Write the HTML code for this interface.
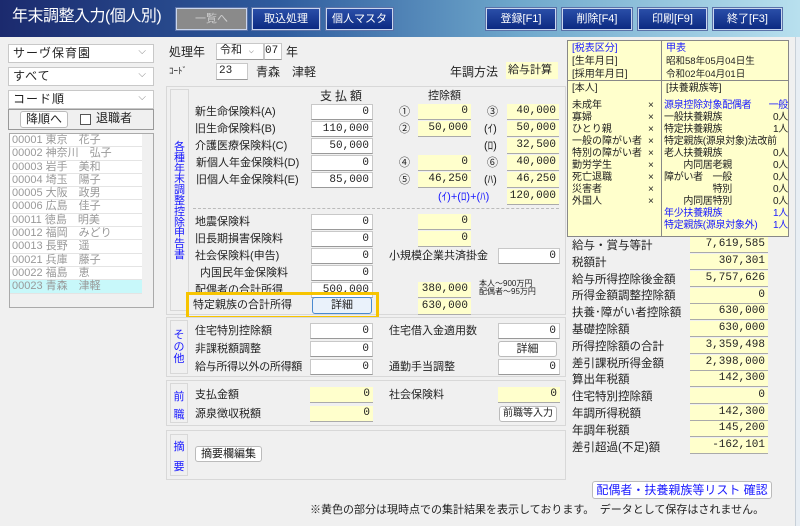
<!DOCTYPE html>
<html><head><meta charset="utf-8"><style>
*{margin:0;padding:0;box-sizing:border-box}
body{width:800px;height:526px;background:#f0f0f0;position:relative;overflow:hidden;font-family:"Liberation Sans","Noto Sans CJK JP",sans-serif;font-size:11px;line-height:1.2;color:#222}
.a{position:absolute;white-space:nowrap}
.tb{position:absolute;left:0;top:0;width:800px;height:37px;background:linear-gradient(90deg,#1b2a6e 0%,#2f5c9e 35%,#6fa8cc 65%,#b8e0ee 100%)}
.title{left:12px;top:7px;color:#fff;font-size:16px;letter-spacing:-0.5px}
.btn{position:absolute;height:22px;top:8px;background:linear-gradient(#2a4ea8,#0c2a82);border:1px solid #c9d6ee;outline:1px solid #5a72a8;color:#fff;font-size:11px;text-align:center;line-height:20px}
.btn.g{background:#8a8a8a;color:#ccc}
.sel{position:absolute;left:8px;width:146px;height:19px;background:#fff;border:1px solid #c8c8c8;font-size:12px;line-height:17px;padding-left:4px;letter-spacing:1px}
.sel:after{content:"⌵";position:absolute;right:6px;top:-2px;color:#888;font-size:10px}
.in{position:absolute;height:16px;background:#fff;border:1px solid #c8c8c8;border-bottom:1px solid #999;text-align:right;padding-right:3px;font-size:11px;line-height:15px;font-family:"Liberation Mono","Noto Sans CJK JP",monospace;overflow:hidden;white-space:nowrap}
.y{background:#ffffcc;border:none;border-bottom:1px solid #aaa}
.pb{position:absolute;border:1px solid #d8d8d8;background:#f0f0f0}
.lb{position:absolute;border:1px solid #d8d8d8;color:#1a1aff;font-size:11px;text-align:center;line-height:12px}
.bt{position:absolute;background:#fff;border:1px solid #bbb;border-radius:3px;text-align:center;font-size:11px;line-height:14px;white-space:nowrap}
.list div{height:13.3px;line-height:13px;font-size:11px;color:#999;padding-left:2px;border-bottom:1px solid #e4e4e4;background:#fff;white-space:nowrap}
.blue{color:#1a1aff}
.info{position:absolute;left:567px;top:40px;width:222px;height:197px;background:#ffffcc;border:1px solid #888}
.info .a{font-size:10px}
</style></head><body>
<div class="tb"></div>
<div class="a title">年末調整入力(個人別)</div>
<div class="btn g" style="left:176px;width:71px">一覧へ</div>
<div class="btn" style="left:252px;width:68px">取込処理</div>
<div class="btn" style="left:326px;width:67px">個人マスタ</div>
<div class="btn" style="left:486px;width:70px">登録[F1]</div>
<div class="btn" style="left:562px;width:70px">削除[F4]</div>
<div class="btn" style="left:638px;width:69px">印刷[F9]</div>
<div class="btn" style="left:713px;width:69px">終了[F3]</div>
<div class="a" style="left:795px;top:37px;width:5px;height:489px;background:#e8eef4;border-left:1px solid #c8d0d8"></div>

<div class="sel" style="top:44px">サーヴ保育園</div>
<div class="sel" style="top:67px">すべて</div>
<div class="sel" style="top:90px">コード順</div>
<div class="a" style="left:8px;top:109px;width:146px;height:21px;border:1px solid #999;background:#f0f0f0"></div>
<div class="bt" style="left:20px;top:111px;width:48px;height:17px;font-size:12px">降順へ</div>
<div class="a" style="left:80px;top:114px;width:11px;height:11px;border:1px solid #555;background:#fff"></div>
<div class="a" style="left:96px;top:111px;font-size:12px">退職者</div>
<div class="a list" style="left:9px;top:133px;width:145px;height:175px;border:1px solid #aaa;background:#f0f0f0;overflow:hidden">
<div style="width:132px">00001 東京　花子</div><div style="width:132px">00002 神奈川　弘子</div><div style="width:132px">00003 岩手　美和</div><div style="width:132px">00004 埼玉　陽子</div><div style="width:132px">00005 大阪　政男</div><div style="width:132px">00006 広島　佳子</div><div style="width:132px">00011 徳島　明美</div><div style="width:132px">00012 福岡　みどり</div><div style="width:132px">00013 長野　遥</div><div style="width:132px">00021 兵庫　藤子</div><div style="width:132px">00022 福島　恵</div><div style="width:132px;background:#c8f8fa">00023 青森　津軽</div></div>

<div class="a" style="left:169px;top:45px;font-size:12px">処理年</div>
<div class="in" style="left:216px;top:43px;width:48px;height:17px;text-align:left;padding-left:3px;font-size:11px;line-height:15px">令和 <span style="color:#999;font-size:9px">⌵</span></div>
<div class="in" style="left:264px;top:43px;width:18px;height:17px;font-size:11px;line-height:15px">07</div>
<div class="a" style="left:286px;top:45px;font-size:12px">年</div>
<div class="a" style="left:169px;top:66px;font-size:9px">ｺｰﾄﾞ</div>
<div class="in" style="left:216px;top:63px;width:32px;height:17px;text-align:left;padding-left:2px;font-size:11px;line-height:15px">23</div>
<div class="a" style="left:256px;top:65px;font-size:12px">青森　津軽</div>
<div class="a" style="left:450px;top:65px;font-size:12px">年調方法</div>
<div class="in y" style="left:506px;top:62px;width:52px;height:17px;text-align:left;padding-left:2px;font-size:11px;line-height:16px;border:none;font-family:inherit">給与計算</div>

<div class="pb" style="left:166px;top:86px;width:400px;height:229px"></div>
<div class="lb" style="left:170px;top:89px;width:19px;height:222px;padding-top:52px;line-height:10.8px">各<br>種<br>年<br>末<br>調<br>整<br>控<br>除<br>申<br>告<br>書</div>
<div class="a" style="left:320px;top:89px;font-size:12px;letter-spacing:3px">支払額</div>
<div class="a" style="left:428px;top:90px;font-size:11px">控除額</div>

<div class="a" style="left:195px;top:106px">新生命保険料(A)</div><div class="in" style="left:311px;top:104px;width:62px">0</div>
<div class="a" style="left:195px;top:123px">旧生命保険料(B)</div><div class="in" style="left:311px;top:121px;width:62px">110,000</div>
<div class="a" style="left:195px;top:140px">介護医療保険料(C)</div><div class="in" style="left:311px;top:138px;width:62px">50,000</div>
<div class="a" style="left:196px;top:157px">新個人年金保険料(D)</div><div class="in" style="left:311px;top:155px;width:62px">0</div>
<div class="a" style="left:196px;top:174px">旧個人年金保険料(E)</div><div class="in" style="left:311px;top:172px;width:62px">85,000</div>

<div class="a" style="left:399px;top:106px">①</div><div class="in y" style="left:418px;top:104px;width:53px">0</div>
<div class="a" style="left:399px;top:123px">②</div><div class="in y" style="left:418px;top:121px;width:53px">50,000</div>
<div class="a" style="left:399px;top:157px">④</div><div class="in y" style="left:418px;top:155px;width:53px">0</div>
<div class="a" style="left:399px;top:174px">⑤</div><div class="in y" style="left:418px;top:172px;width:53px">46,250</div>
<div class="a" style="left:487px;top:106px">③</div><div class="in y" style="left:507px;top:104px;width:52px">40,000</div>
<div class="a" style="left:484px;top:123px">(ｲ)</div><div class="in y" style="left:507px;top:121px;width:52px">50,000</div>
<div class="a" style="left:484px;top:140px">(ﾛ)</div><div class="in y" style="left:507px;top:138px;width:52px">32,500</div>
<div class="a" style="left:487px;top:157px">⑥</div><div class="in y" style="left:507px;top:155px;width:52px">40,000</div>
<div class="a" style="left:484px;top:174px">(ﾊ)</div><div class="in y" style="left:507px;top:172px;width:52px">46,250</div>
<div class="a blue" style="left:438px;top:191px">(ｲ)+(ﾛ)+(ﾊ)</div><div class="in y" style="left:507px;top:189px;width:52px">120,000</div>
<div class="a" style="left:193px;top:208px;width:366px;border-top:1px dashed #bbb"></div>

<div class="a" style="left:195px;top:216px">地震保険料</div><div class="in" style="left:311px;top:214px;width:62px">0</div>
<div class="a" style="left:195px;top:233px">旧長期損害保険料</div><div class="in" style="left:311px;top:231px;width:62px">0</div>
<div class="a" style="left:195px;top:250px">社会保険料(申告)</div><div class="in" style="left:311px;top:248px;width:62px">0</div>
<div class="a" style="left:200px;top:267px">内国民年金保険料</div><div class="in" style="left:311px;top:265px;width:62px">0</div>
<div class="a" style="left:195px;top:284px">配偶者の合計所得</div><div class="in" style="left:311px;top:282px;width:62px">500,000</div>
<div class="in y" style="left:418px;top:214px;width:53px">0</div>
<div class="in y" style="left:418px;top:231px;width:53px">0</div>
<div class="a" style="left:389px;top:250px">小規模企業共済掛金</div><div class="in" style="left:498px;top:248px;width:62px">0</div>
<div class="in y" style="left:418px;top:282px;width:53px">380,000</div>
<div class="a" style="left:479px;top:280px;font-size:8px;line-height:8px">本人～900万円<br>配偶者～95万円</div>
<div class="in y" style="left:418px;top:299px;width:53px">630,000</div>
<div class="a" style="left:186px;top:292px;width:193px;height:27px;border:3px solid #f7c400"></div>
<div class="a" style="left:193px;top:299px">特定親族の合計所得</div>
<div class="bt" style="left:312px;top:297px;width:60px;height:17px;border-color:#4a8ad0;background:#eaf2fb;line-height:15px">詳細</div>

<div class="pb" style="left:166px;top:317px;width:400px;height:60px"></div>
<div class="lb" style="left:170px;top:320px;width:18px;height:54px;padding-top:8px">そ<br>の<br>他</div>
<div class="a" style="left:195px;top:325px">住宅特別控除額</div><div class="in" style="left:310px;top:323px;width:63px">0</div>
<div class="a" style="left:195px;top:343px">非課税額調整</div><div class="in" style="left:310px;top:341px;width:63px">0</div>
<div class="a" style="left:195px;top:361px;letter-spacing:-0.3px">給与所得以外の所得額</div><div class="in" style="left:310px;top:359px;width:63px">0</div>
<div class="a" style="left:389px;top:325px">住宅借入金適用数</div><div class="in" style="left:498px;top:323px;width:62px">0</div>
<div class="bt" style="left:498px;top:341px;width:59px;height:16px">詳細</div>
<div class="a" style="left:389px;top:361px">通勤手当調整</div><div class="in" style="left:498px;top:359px;width:62px">0</div>

<div class="pb" style="left:166px;top:380px;width:400px;height:46px"></div>
<div class="lb" style="left:170px;top:383px;width:18px;height:40px;padding-top:4px;line-height:18px">前<br>職</div>
<div class="a" style="left:195px;top:389px">支払金額</div><div class="in y" style="left:310px;top:387px;width:63px">0</div>
<div class="a" style="left:195px;top:408px">源泉徴収税額</div><div class="in y" style="left:310px;top:406px;width:63px">0</div>
<div class="a" style="left:389px;top:389px">社会保険料</div><div class="in y" style="left:498px;top:387px;width:62px">0</div>
<div class="bt" style="left:499px;top:406px;width:58px;height:16px;font-size:10px">前職等入力</div>

<div class="pb" style="left:166px;top:430px;width:400px;height:50px"></div>
<div class="lb" style="left:170px;top:434px;width:18px;height:42px;padding-top:2px;line-height:20px">摘<br>要</div>
<div class="bt" style="left:195px;top:446px;width:67px;height:16px">摘要欄編集</div>

<div class="info">
<div class="a" style="left:93px;top:0;height:195px;border-left:1px solid #888"></div>
<div class="a" style="left:0;top:39px;width:220px;border-top:1px solid #888"></div>
<div class="a blue" style="left:4px;top:2px">[税表区分]</div>
<div class="a" style="left:4px;top:15px">[生年月日]</div>
<div class="a" style="left:4px;top:28px">[採用年月日]</div>
<div class="a blue" style="left:98px;top:2px">甲表</div>
<div class="a" style="left:98px;top:15px;font-size:9.5px">昭和58年05月04日生</div>
<div class="a" style="left:98px;top:28px;font-size:9.5px">令和02年04月01日</div>
<div class="a" style="left:4px;top:42px">[本人]</div>
<div class="a" style="left:98px;top:42px">[扶養親族等]</div>
<div class="a" style="left:4px;top:59px;line-height:12px">未成年<br>寡婦<br>ひとり親<br>一般の障がい者<br>特別の障がい者<br>勤労学生<br>死亡退職<br>災害者<br>外国人</div>
<div class="a" style="left:80px;top:59px;line-height:12px">×<br>×<br>×<br>×<br>×<br>×<br>×<br>×<br>×</div>
<div class="a" style="left:96px;top:59px;line-height:12px;width:124px;font-size:10px;letter-spacing:-0.3px">
<span class="blue">源泉控除対象配偶者<span style="float:right">一般</span></span><br>一般扶養親族<span style="float:right">0人</span><br>特定扶養親族<span style="float:right">1人</span><br>特定親族(源泉対象)法改前<br>老人扶養親族<span style="float:right">0人</span><br>　　内同居老親<span style="float:right">0人</span><br>障がい者　一般<span style="float:right">0人</span><br>　　　　　特別<span style="float:right">0人</span><br>　　内同居特別<span style="float:right">0人</span><br><span class="blue">年少扶養親族<span style="float:right">1人</span></span><br><span class="blue">特定親族(源泉対象外)<span style="float:right">1人</span></span></div>
</div>

<div class="a" style="left:572px;top:238px;font-size:11.5px;line-height:16.8px">給与・賞与等計<br>税額計<br>給与所得控除後金額<br>所得金額調整控除額<br>扶養･障がい者控除額<br>基礎控除額<br>所得控除額の合計<br>差引課税所得金額<br>算出年税額<br>住宅特別控除額<br>年調所得税額<br>年調年税額<br>差引超過(不足)額</div>
<div class="in y" style="left:690px;top:237px;width:78px">7,619,585</div>
<div class="in y" style="left:690px;top:254px;width:78px">307,301</div>
<div class="in y" style="left:690px;top:271px;width:78px">5,757,626</div>
<div class="in y" style="left:690px;top:288px;width:78px">0</div>
<div class="in y" style="left:690px;top:304px;width:78px">630,000</div>
<div class="in y" style="left:690px;top:321px;width:78px">630,000</div>
<div class="in y" style="left:690px;top:338px;width:78px">3,359,498</div>
<div class="in y" style="left:690px;top:355px;width:78px">2,398,000</div>
<div class="in y" style="left:690px;top:371px;width:78px">142,300</div>
<div class="in y" style="left:690px;top:388px;width:78px">0</div>
<div class="in y" style="left:690px;top:405px;width:78px">142,300</div>
<div class="in y" style="left:690px;top:421px;width:78px">145,200</div>
<div class="in y" style="left:690px;top:438px;width:78px">-162,101</div>

<div class="bt blue" style="left:592px;top:481px;width:180px;height:18px;font-size:12px;line-height:16px">配偶者・扶養親族等リスト 確認</div>
<div class="a" style="left:310px;top:504px;font-size:11px">※黄色の部分は現時点での集計結果を表示しております。　データとして保存はされません。</div>
</body></html>
